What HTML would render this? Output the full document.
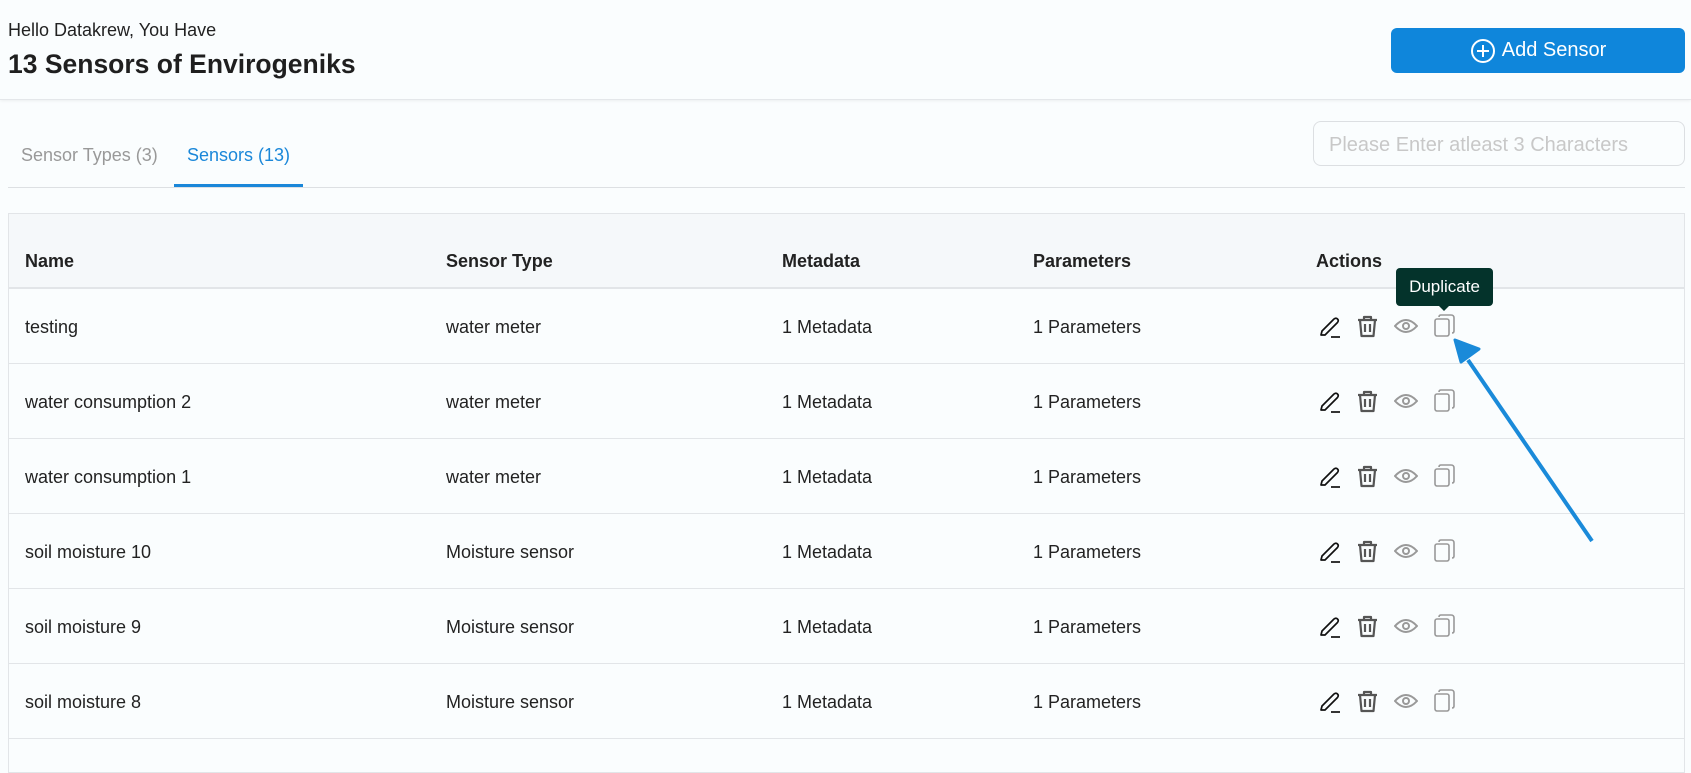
<!DOCTYPE html>
<html><head><meta charset="utf-8"><style>
*{box-sizing:border-box;margin:0;padding:0}
body{width:1691px;height:713px;overflow:hidden;background:#fafdfe;font-family:"Liberation Sans",sans-serif;color:#222;position:relative}
.hdr{position:absolute;left:0;top:0;width:1691px;height:100px;border-bottom:1px solid #e4e7ea;box-shadow:0 1px 3px rgba(0,0,0,.06)}
.hello{position:absolute;left:8px;top:20px;font-size:18px;color:#222}
.title{position:absolute;left:8px;top:49px;font-size:26.5px;font-weight:bold;color:#1f1f1f}
.btn{position:absolute;left:1391px;top:28px;width:294px;height:45px;background:#0f86db;border-radius:6px;color:#fff;font-size:20px;display:flex;align-items:center;justify-content:center;gap:6px}
.tab{position:absolute;top:145px;font-size:18px}
.search{position:absolute;left:1313px;top:121px;width:372px;height:45px;border:1px solid #dcdfe2;border-radius:8px;font-size:20px;color:#c8c8c8;padding:12px 0 0 15px}
.tabline{position:absolute;left:8px;top:187px;width:1677px;height:1px;background:#dde0e3}
.ul{position:absolute;left:174px;top:184px;width:129px;height:3px;background:#1a87d9}
.table{position:absolute;left:8px;top:213px;width:1677px;height:560px;border:1px solid #e2e5e8}
.th{position:absolute;left:0;top:0;width:100%;height:75px;background:#f5f8fa;border-bottom:2px solid #e2e5e8}
.h{position:absolute;top:37px;font-size:18px;font-weight:bold;color:#222}
.row{position:absolute;left:0;width:100%;height:75px;border-bottom:1px solid #e2e5e8}
.c{position:absolute;top:28px;font-size:18px;color:#222}
.ic{position:absolute;top:26px}
.tip{position:absolute;left:1396px;top:268px;width:97px;height:38px;background:#04332b;border-radius:4px;color:#fff;font-size:17px;text-align:center;line-height:38px}
.tip:after{content:"";position:absolute;left:43px;bottom:-5px;border:5px solid transparent;border-top-color:#04332b;border-bottom:0}
</style></head><body>
<div class="hdr">
<div class="hello">Hello Datakrew, You Have</div>
<div class="title">13 Sensors of Envirogeniks</div>
<div class="btn"><svg width="26" height="26" viewBox="0 0 26 26"><circle cx="13" cy="13" r="11" fill="none" stroke="#fff" stroke-width="2"/><path d="M13 7v12M7 13h12" stroke="#fff" stroke-width="2"/></svg>Add Sensor</div>
</div>
<div class="tab" style="left:21px;color:#999">Sensor Types (3)</div>
<div class="tab" style="left:187px;color:#1a87d9">Sensors (13)</div>
<div class="search">Please Enter atleast 3 Characters</div>
<div class="tabline"></div><div class="ul"></div>
<div class="table">
<div class="th"><div class="h" style="left:16px">Name</div><div class="h" style="left:437px">Sensor Type</div><div class="h" style="left:773px">Metadata</div><div class="h" style="left:1024px">Parameters</div><div class="h" style="left:1307px">Actions</div></div>
<div id="rows"></div>
</div>
<div class="tip">Duplicate</div>
<svg style="position:absolute;left:0;top:0" width="1691" height="713"><line x1="1592" y1="541" x2="1468" y2="360" stroke="#1a8ad9" stroke-width="4"/><polygon points="1455,340 1479,349 1461,362" fill="#1a8ad9" stroke="#1a8ad9" stroke-width="3" stroke-linejoin="round"/></svg>
<script>
var d=[["testing","water meter"],["water consumption 2","water meter"],["water consumption 1","water meter"],["soil moisture 10","Moisture sensor"],["soil moisture 9","Moisture sensor"],["soil moisture 8","Moisture sensor"]];
var icons='<svg class="ic" style="left:1310px;top:27px" width="22" height="22" viewBox="0 0 22 22"><path d="M2 19L3 15L15 3Q17 1.5 18.5 3Q20 4.5 18.5 6.5L6 19Z" fill="none" stroke="#111" stroke-width="1.7" stroke-linejoin="round"/><path d="M12 21H21" stroke="#111" stroke-width="1.7"/></svg>'+
'<svg class="ic" style="left:1347px" width="23" height="23" viewBox="0 0 23 23"><path d="M2 5H21M8 5V2H15V5M4 5L5.5 21H17.5L19 5" fill="none" stroke="#555" stroke-width="2.2" stroke-linejoin="round"/><path d="M9 9V17M14 9V17" stroke="#555" stroke-width="2.2"/></svg>'+
'<svg class="ic" style="left:1385px;top:29px" width="24" height="16" viewBox="0 0 24 16"><path d="M1 8Q12 -4 23 8Q12 20 1 8Z" fill="none" stroke="#999" stroke-width="2"/><circle cx="12" cy="8" r="3" fill="none" stroke="#999" stroke-width="2"/></svg>'+
'<svg class="ic" style="left:1425px;top:25px" width="22" height="23" viewBox="0 0 22 23"><rect x="1" y="5" width="14" height="17" rx="2" fill="none" stroke="#999" stroke-width="1.6"/><path d="M5 3Q5 1 7 1H17Q20 1 20 4V17Q20 19 18 19" fill="none" stroke="#999" stroke-width="1.6"/></svg>';
var h='';d.forEach(function(r,i){h+='<div class="row" style="top:'+(75+i*75)+'px"><div class="c" style="left:16px">'+r[0]+'</div><div class="c" style="left:437px">'+r[1]+'</div><div class="c" style="left:773px">1 Metadata</div><div class="c" style="left:1024px">1 Parameters</div>'+icons+'</div>'});
document.getElementById('rows').innerHTML=h;
</script>
</body></html>
